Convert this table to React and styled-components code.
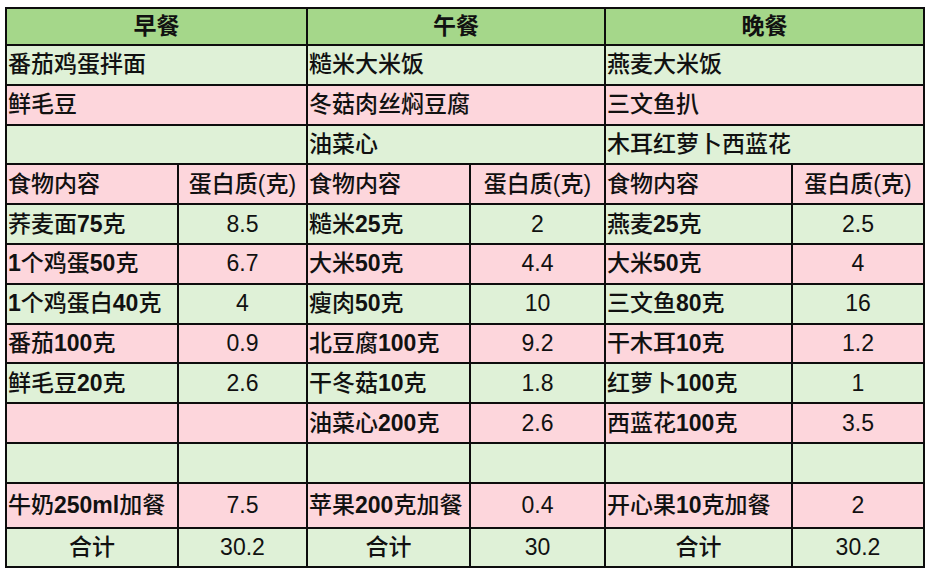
import React from "react";
import styled, { createGlobalStyle } from "styled-components";

const GlobalStyle = createGlobalStyle`
  html, body {
    margin: 0;
    padding: 0;
    background: #ffffff;
  }
  body {
    font-family: "Liberation Sans", "Noto Sans CJK SC", sans-serif;
    color: #111111;
  }
`;

const COLORS = {
  head: "#a5d78a",
  green: "#dff1d7",
  pink: "#fdd6dc",
};

const Page = styled.main`
  padding: 7px 0 0 5px;
`;

const Table = styled.div`
  display: grid;
  width: 920px;
  box-sizing: border-box;
  grid-template-columns: 170px 127px 161px 133px 185px 130px;
  grid-template-rows: 35px repeat(11, 37.8px) 43px 37px;
  gap: 2px;
  padding: 2px;
  background: #0d0d0d;
`;

const Cell = styled.div`
  grid-column: span ${(p) => p.$span || 1};
  background: ${(p) => COLORS[p.$tone]};
  display: flex;
  align-items: center;
  justify-content: ${(p) => (p.$center ? "center" : "flex-start")};
  padding-left: ${(p) => (p.$center ? "0" : "1px")};
  font-size: 23px;
  font-weight: ${(p) => (p.$bold ? 700 : 500)};
  white-space: nowrap;
  overflow: hidden;
  line-height: 1;
`;

const Num = styled.b`
  font-family: "Liberation Sans", sans-serif;
  font-weight: 700;
`;

const Value = styled.span`
  font-family: "Liberation Sans", sans-serif;
  font-weight: 400;
`;

// digits and latin letters in food names are set in bold
function Food({ text }) {
  const parts = text.split(/([0-9a-z]+)/);
  return (
    <>
      {parts.map((part, i) =>
        /^[0-9a-z]+$/.test(part) ? <Num key={i}>{part}</Num> : <span key={i}>{part}</span>
      )}
    </>
  );
}

const meals = ["早餐", "午餐", "晚餐"];

const dishes = [
  ["番茄鸡蛋拌面", "糙米大米饭", "燕麦大米饭"],
  ["鲜毛豆", "冬菇肉丝焖豆腐", "三文鱼扒"],
  ["", "油菜心", "木耳红萝卜西蓝花"],
];

const items = [
  [["荞麦面75克", "8.5"], ["糙米25克", "2"], ["燕麦25克", "2.5"]],
  [["1个鸡蛋50克", "6.7"], ["大米50克", "4.4"], ["大米50克", "4"]],
  [["1个鸡蛋白40克", "4"], ["瘦肉50克", "10"], ["三文鱼80克", "16"]],
  [["番茄100克", "0.9"], ["北豆腐100克", "9.2"], ["干木耳10克", "1.2"]],
  [["鲜毛豆20克", "2.6"], ["干冬菇10克", "1.8"], ["红萝卜100克", "1"]],
  [["", ""], ["油菜心200克", "2.6"], ["西蓝花100克", "3.5"]],
  [["", ""], ["", ""], ["", ""]],
  [["牛奶250ml加餐", "7.5"], ["苹果200克加餐", "0.4"], ["开心果10克加餐", "2"]],
];

const totals = ["30.2", "30", "30.2"];

export default function App() {
  return (
    <Page>
      <GlobalStyle />
      <Table>
        {meals.map((m) => (
          <Cell key={m} $span={2} $tone="head" $center $bold>
            {m}
          </Cell>
        ))}

        {dishes.map((row, r) =>
          row.map((d, c) => (
            <Cell key={`d${r}${c}`} $span={2} $tone={r % 2 === 0 ? "green" : "pink"}>
              {d}
            </Cell>
          ))
        )}

        {meals.map((m) => (
          <React.Fragment key={`h${m}`}>
            <Cell $tone="pink">食物内容</Cell>
            <Cell $tone="pink" $center>
              蛋白质(克)
            </Cell>
          </React.Fragment>
        ))}

        {items.map((row, r) =>
          row.map(([name, val], c) => (
            <React.Fragment key={`i${r}${c}`}>
              <Cell $tone={r % 2 === 0 ? "green" : "pink"}>
                <Food text={name} />
              </Cell>
              <Cell $tone={r % 2 === 0 ? "green" : "pink"} $center>
                <Value>{val}</Value>
              </Cell>
            </React.Fragment>
          ))
        )}

        {totals.map((t, c) => (
          <React.Fragment key={`t${c}`}>
            <Cell $tone="green" $center>
              合计
            </Cell>
            <Cell $tone="green" $center>
              <Value>{t}</Value>
            </Cell>
          </React.Fragment>
        ))}
      </Table>
    </Page>
  );
}
